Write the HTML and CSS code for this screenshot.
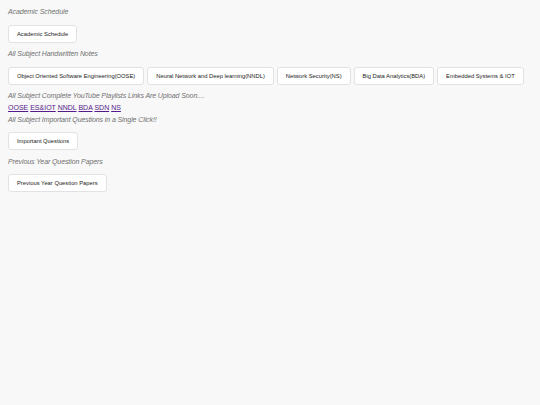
FILE: index.html
```
<!DOCTYPE html>
<html lang="en">
<head>
    <meta charset="UTF-8">
    <meta name="viewport" content="width=device-width, initial-scale=1.0">
    <title>Study Materials</title>
    <link rel="stylesheet" href="styles.css">
</head>
<body>

<div class="container">
    <p class="label">Academic Schedule</p>
    <div class="btn-row">
        <button class="btn">Academic Schedule</button>
    </div>

    <p class="label">All Subject Handwritten Notes</p>
    <div class="btn-row">
        <button class="btn">Object Oriented Software Engineering(OOSE)</button>
        <button class="btn">Neural Network and Deep learning(NNDL)</button>
        <button class="btn">Network Security(NS)</button>
        <button class="btn">Big Data Analytics(BDA)</button>
        <button class="btn">Embedded Systems &amp; IOT</button>
    </div>

    <p class="label">All Subject Complete YouTube Playlists Links Are Upload Soon....</p>
    <div class="links">
        <a href="#">OOSE</a> <a href="#">ES&amp;IOT</a> <a href="#">NNDL</a> <a href="#">BDA</a> <a href="#">SDN</a> <a href="#">NS</a>
    </div>
    <p class="label tight">All Subject Important Questions in a Single Click!!</p>
    <div class="btn-row compact">
        <button class="btn">Important Questions</button>
    </div>

    <p class="label loose">Previous Year Question Papers</p>
    <div class="btn-row compact">
        <button class="btn">Previous Year Question Papers</button>
    </div>
</div>

</body>
</html>
```

FILE: styles.css
```
body {
    font-family: 'Liberation Sans', Arial, Helvetica, sans-serif;
    margin: 0;
    padding: 0;
    background-color: #f8f8f8;
}

.container {
    padding: 7px 8px;
}

.label {
    margin: 6px 0 0;
    font-size: 7px;
    line-height: 10px;
    letter-spacing: -0.1px;
    font-style: italic;
    color: #707070;
}

.label:first-child {
    margin-top: 0;
}

.label.tight {
    margin-top: 1px;
}

.label.loose {
    margin-top: 7px;
}

.btn-row {
    display: flex;
    flex-wrap: wrap;
    gap: 3px;
    margin-top: 8px;
}

.btn-row.compact {
    margin-top: 7px;
}

.btn {
    font-family: inherit;
    font-size: 5.8px;
    color: #222;
    background-color: #fff;
    border: 1px solid #e2e2e2;
    border-radius: 3px;
    height: 18px;
    padding: 0 8px;
    white-space: nowrap;
    cursor: pointer;
}

.links {
    margin-top: 1px;
    font-size: 7px;
    line-height: 12px;
}

.links a {
    color: #551a8b;
}
```
